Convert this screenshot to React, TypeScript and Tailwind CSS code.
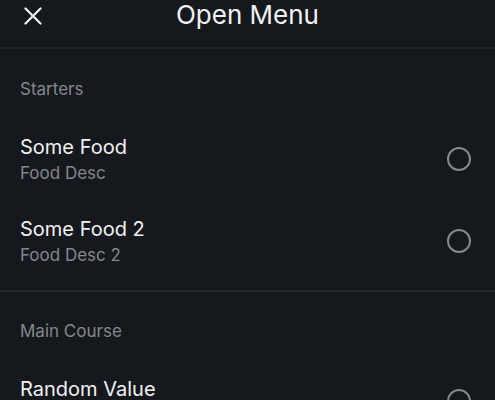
const SECTIONS = [
  {
    title: "Starters",
    pad: "pt-[28px] pb-[8px] border-b-2 border-[#22262a]",
    items: [
      { name: "Some Food", desc: "Food Desc" },
      { name: "Some Food 2", desc: "Food Desc 2" },
    ],
  },
  {
    title: "Main Course",
    pad: "pt-[27px]",
    items: [{ name: "Random Value", desc: "Value Desc" }],
  },
];

function Radio() {
  return (
    <span className="size-6 shrink-0 rounded-full border-2 border-[#85888c]" />
  );
}

export default function App() {
  return (
    <div className="h-[400px] w-[495px] overflow-hidden bg-[#15181c] font-['Inter',sans-serif] text-[#f1f2f3]">
      <header className="relative flex h-[49px] items-start justify-center border-b-2 border-[#22262a]">
        <button className="absolute left-[24px] top-[7px] text-[#f1f2f3]">
          <svg width="18" height="18" viewBox="0 0 18 18" fill="none" stroke="currentColor" strokeWidth="2.2" strokeLinecap="round">
            <path d="M1.5 1.5 L16.5 16.5 M16.5 1.5 L1.5 16.5" />
          </svg>
        </button>
        <h1 className="text-[26px] leading-[30px]">Open Menu</h1>
      </header>

      {SECTIONS.map((section) => (
        <section key={section.title} className={section.pad}>
          <div className="px-5 text-[17px] leading-6 text-[#85888c]">
            {section.title}
          </div>
          <div className="mt-[17px]">
            {section.items.map((item) => (
              <div
                key={item.name}
                className="flex h-[82px] items-center justify-between pl-5 pr-[24px]"
              >
                <div>
                  <div className="text-[20px] leading-7">{item.name}</div>
                  <div className="text-[17px] leading-[25px] text-[#85888c]">
                    {item.desc}
                  </div>
                </div>
                <Radio />
              </div>
            ))}
          </div>
        </section>
      ))}
    </div>
  );
}
